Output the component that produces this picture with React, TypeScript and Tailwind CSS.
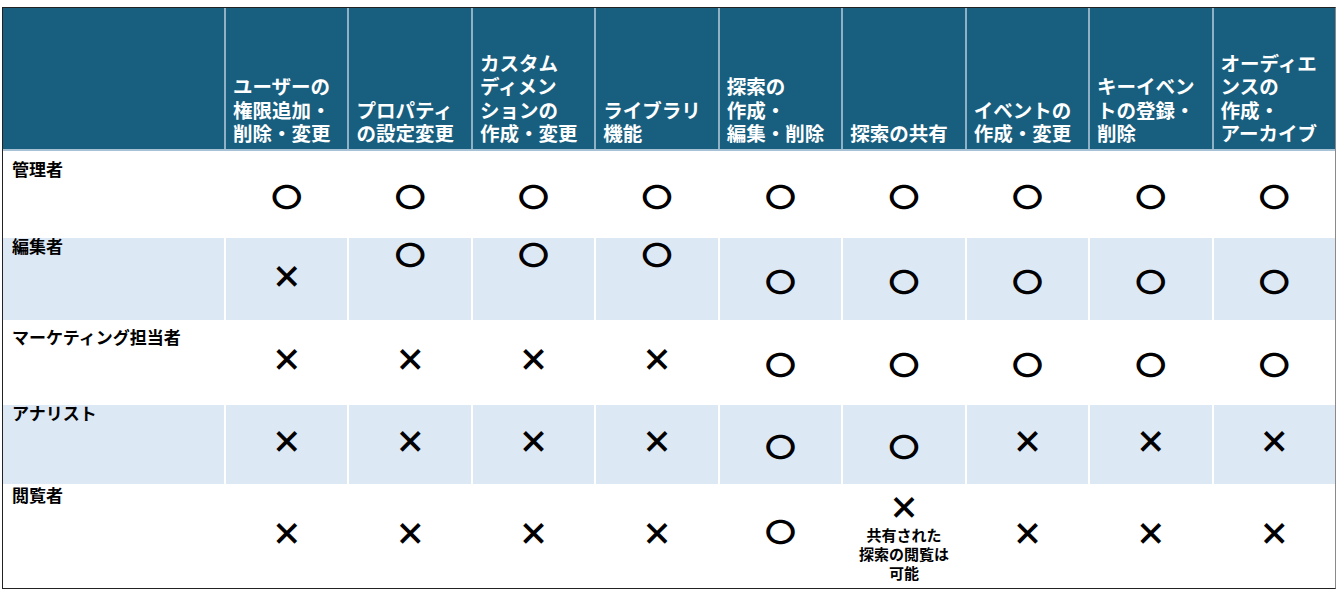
import React from 'react';

type Mark = 'o' | 'x' | 'o-top' | 'o-up' | 'share';

const headers: string[][] = [
  ['ユーザーの', '権限追加・', '削除・変更'],
  ['プロパティ', 'の設定変更'],
  ['カスタム', 'ディメン', 'ションの', '作成・変更'],
  ['ライブラリ', '機能'],
  ['探索の', '作成・', '編集・削除'],
  ['探索の共有'],
  ['イベントの', '作成・変更'],
  ['キーイベン', 'トの登録・', '削除'],
  ['オーディエ', 'ンスの', '作成・', 'アーカイブ'],
];

const rows: { role: string; height: string; pad: string; tint: boolean; marks: Mark[] }[] = [
  { role: '管理者', height: 'h-[85px]', pad: 'mt-[3px]', tint: false, marks: ['o', 'o', 'o', 'o', 'o', 'o', 'o', 'o', 'o'] },
  { role: '編集者', height: 'h-[84px]', pad: '-mt-[5px]', tint: true, marks: ['x', 'o-top', 'o-top', 'o-top', 'o', 'o', 'o', 'o', 'o'] },
  { role: 'マーケティング担当者', height: 'h-[83px]', pad: 'mt-[2px]', tint: false, marks: ['x', 'x', 'x', 'x', 'o', 'o', 'o', 'o', 'o'] },
  { role: 'アナリスト', height: 'h-[81px]', pad: '-mt-[5px]', tint: true, marks: ['x', 'x', 'x', 'x', 'o', 'o', 'x', 'x', 'x'] },
  { role: '閲覧者', height: 'h-[104px]', pad: '-mt-[4px]', tint: false, marks: ['x', 'x', 'x', 'x', 'o-up', 'share', 'x', 'x', 'x'] },
];

const Circle: React.FC<{ up?: boolean }> = ({ up }) => (
  <span
    className={`inline-block text-[31px] leading-[30px] font-bold scale-y-[0.86] ${up ? '-translate-y-[6px]' : 'translate-y-[1px]'}`}
  >
    〇
  </span>
);

const Cross = () => (
  <span className="inline-block text-[31px] leading-[30px] font-black -translate-y-[5px]">×</span>
);

const Cell: React.FC<{ mark: Mark }> = ({ mark }) => {
  if (mark === 'o') return <Circle />;
  if (mark === 'o-up') return <Circle up />;
  if (mark === 'x') return <Cross />;
  if (mark === 'o-top') {
    return (
      <div className="pb-[50px]">
        <Circle />
      </div>
    );
  }
  return (
    <div className="flex flex-col items-center">
      <span className="inline-block text-[31px] leading-[30px] font-black -translate-y-[2px]">×</span>
      <p className="mt-[2px] text-[15px] leading-[19px] font-bold text-center">
        共有された
        <br />
        探索の閲覧は
        <br />
        可能
      </p>
    </div>
  );
};

export default function App() {
  return (
    <div className="min-h-screen bg-white pt-[7px] pl-[2px]" style={{ fontFamily: '"Noto Sans CJK JP", "Noto Sans", sans-serif' }}>
      <div className="w-[1334px] border border-[#222] border-r-[#8a8a8a] text-black">
        {/* header */}
        <div className="grid grid-cols-[221px_repeat(9,1fr)] h-[143px] bg-[#185f7f] border-b-2 border-[#a6c2d4]">
          <div />
          {headers.map((lines, i) => (
            <div key={i} className="flex items-end border-l-2 border-[#8fb0c5] pl-[7px] pb-[4px]">
              <p className="text-[19.5px] leading-[23.6px] font-bold text-white whitespace-nowrap">
                {lines.map((l, j) => (
                  <React.Fragment key={j}>
                    {l}
                    {j < lines.length - 1 && <br />}
                  </React.Fragment>
                ))}
              </p>
            </div>
          ))}
        </div>

        {rows.map((row) => (
          <div
            key={row.role}
            className={`grid grid-cols-[221px_repeat(9,1fr)] ${row.height} ${row.tint ? 'bg-[#dde8f5]' : 'bg-white'} border-t-2 border-white`}
          >
            <div className="pl-[9px] pt-[3px]">
              <span className={`block text-[17px] leading-[20px] font-bold whitespace-nowrap ${row.pad}`}>{row.role}</span>
            </div>
            {row.marks.map((m, i) => (
              <div key={i} className="flex items-center justify-center border-l-2 border-white">
                <Cell mark={m} />
              </div>
            ))}
          </div>
        ))}
      </div>
    </div>
  );
}
